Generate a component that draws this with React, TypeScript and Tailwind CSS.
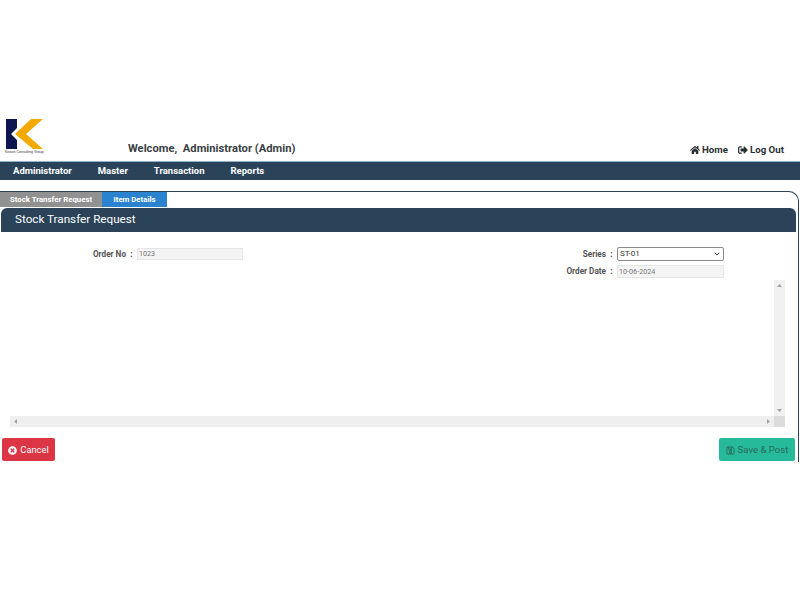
import { FaHome, FaSignOutAlt, FaTimesCircle, FaRegSave } from "react-icons/fa";
import { ChevronDown } from "lucide-react";

const tahoma = "font-['Roboto',sans-serif]";

function Logo() {
  return (
    <div className="w-[40px] h-[36px] flex flex-col items-start">
      <svg width="38" height="30" viewBox="0 0 38 30">
        <path d="M0 0H11V9L5 15L11 21V30H0Z" fill="#0d1550" />
        <path d="M25 0H37L20 15L37 30H27L9 15Z" fill="#f2a900" />
      </svg>
      <div className="text-[3.5px] leading-[5px] mt-[1px] -ml-[1px] whitespace-nowrap text-[#333] font-['Liberation_Sans',sans-serif]">
        Kisson Consulting Group
      </div>
    </div>
  );
}

function Field({ label, children }: { label: string; children: React.ReactNode }) {
  return (
    <div className="flex items-center">
      <span className="w-[58px] text-right text-[8.2px] font-bold text-[#555]">{label}</span>
      <span className="w-[11px] text-center text-[8.5px] font-bold text-[#555]">:</span>
      {children}
    </div>
  );
}

function Tri({ d }: { d: string }) {
  return (
    <svg width="7" height="7" viewBox="0 0 7 7" fill="#a3a3a3">
      <path d={d} />
    </svg>
  );
}

export default function App() {
  return (
    <div className={`h-[600px] w-[800px] bg-white pt-[119px] overflow-hidden ${tahoma}`}>
      <header className="h-[42px] flex pl-[6px] pr-[16px]">
        <Logo />
        <div className="ml-[82px] pt-[22px] text-[11.2px] leading-[16px] font-bold text-[#3a3f44] whitespace-pre">
          Welcome,  Administrator (Admin)
        </div>
        <div className="ml-auto pt-[24px] flex items-start gap-[10px] text-[9.7px] leading-[14px] font-bold text-[#2a2f33]">
          <span className="flex items-center gap-[2px]"><FaHome className="w-[10px] h-[10px]" />Home</span>
          <span className="flex items-center gap-[2px]"><FaSignOutAlt className="w-[10px] h-[10px]" />Log Out</span>
        </div>
      </header>
      <nav className="h-[19px] bg-[#2a4359] border-t border-[#8fb3cc] flex items-center pl-[13px] gap-[26px] text-[9.5px] font-bold text-white">
        <span>Administrator</span>
        <span>Master</span>
        <span>Transaction</span>
        <span>Reports</span>
      </nav>
      <main className="mt-[11px] h-[271px] w-[799px] border-t border-r border-[#2a4359] rounded-tr-[10px] flex flex-col">
        <div className="flex h-[15px] text-[7.8px] font-bold text-white">
          <span className="w-[102px] bg-[#919191] flex items-center justify-center">Stock Transfer Request</span>
          <span className="w-[65px] bg-[#2b83cf] flex items-center justify-center">Item Details</span>
        </div>
        <div className="mt-[1px] ml-[1px] w-[795px] h-[24px] bg-[#2a4359] rounded-t-[6px] flex items-center pl-[14px] text-[11.7px] text-white">
          Stock Transfer Request
        </div>
        <div className="flex justify-between items-start pl-[68px] pr-[74px] pt-[15px] h-[48px]">
          <div className="mt-[1px]">
            <Field label="Order No">
              <div className="w-[106px] h-[12px] bg-[#f4f4f4] border border-[#e6e6e6] text-[7.2px] leading-[10px] pl-[1px] text-[#777]">1023</div>
            </Field>
          </div>
          <div className="flex flex-col gap-[4px]">
            <Field label="Series">
              <div className="w-[107px] h-[14px] bg-white border border-[#8a8a8a] rounded-[2px] flex items-center justify-between pl-[2px] pr-[2px] text-[8px] text-[#333]">
                ST-01
                <ChevronDown className="w-[8px] h-[8px]" strokeWidth={3} />
              </div>
            </Field>
            <Field label="Order Date">
              <div className="w-[107px] h-[13px] bg-[#f4f4f4] border border-[#e6e6e6] text-[7.2px] leading-[11px] pl-[1px] text-[#777]">10-06-2024</div>
            </Field>
          </div>
        </div>
        <div className="ml-[10px] mr-[13px] h-[147px] flex flex-col">
          <div className="flex-1 flex justify-end">
            <div className="w-[11px] bg-[#f1f1f1] flex flex-col justify-between items-center py-[2px]">
              <Tri d="M3.5 2L6 5H1Z" />
              <Tri d="M1 2H6L3.5 5Z" />
            </div>
          </div>
          <div className="h-[11px] flex">
            <div className="flex-1 bg-[#efefef] flex items-center justify-between px-[2px]">
              <Tri d="M2 3.5L5 1V6Z" />
              <Tri d="M2 1L5 3.5L2 6Z" />
            </div>
            <div className="w-[11px] bg-[#dcdcdc]" />
          </div>
        </div>
        <div className="flex justify-between pl-[2px] pr-[3px] mt-[11px]">
          <button className="h-[23px] w-[53px] bg-[#dc3545] rounded-[2px] flex items-center justify-center gap-[3px] text-[9.3px] pt-[1px] text-white">
            <FaTimesCircle className="w-[9px] h-[9px]" />Cancel
          </button>
          <button className="h-[23px] w-[76px] bg-[#26b99a] rounded-[2px] flex items-center justify-center gap-[3px] text-[9.6px] pt-[1px] text-[#2a6b5e]">
            <FaRegSave className="w-[9px] h-[9px]" />Save &amp; Post
          </button>
        </div>
      </main>
    </div>
  );
}
